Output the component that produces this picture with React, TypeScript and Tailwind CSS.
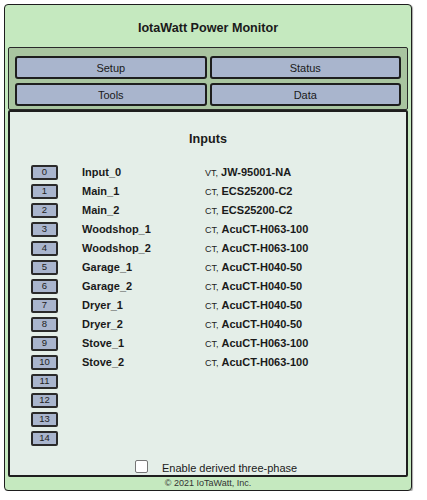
import React from "react";

const rows: { name?: string; type?: string; model?: string }[] = [
  { name: "Input_0", type: "VT", model: "JW-95001-NA" },
  { name: "Main_1", type: "CT", model: "ECS25200-C2" },
  { name: "Main_2", type: "CT", model: "ECS25200-C2" },
  { name: "Woodshop_1", type: "CT", model: "AcuCT-H063-100" },
  { name: "Woodshop_2", type: "CT", model: "AcuCT-H063-100" },
  { name: "Garage_1", type: "CT", model: "AcuCT-H040-50" },
  { name: "Garage_2", type: "CT", model: "AcuCT-H040-50" },
  { name: "Dryer_1", type: "CT", model: "AcuCT-H040-50" },
  { name: "Dryer_2", type: "CT", model: "AcuCT-H040-50" },
  { name: "Stove_1", type: "CT", model: "AcuCT-H063-100" },
  { name: "Stove_2", type: "CT", model: "AcuCT-H063-100" },
  {},
  {},
  {},
  {},
];

export default function App() {
  return (
    <div className="pl-[4px] pt-[4px] font-['Liberation_Sans',Arial,sans-serif] text-[#1a1a1a]">
      <div className="w-[408px] h-[487px] border border-[#1e1e1e] rounded-[4px] bg-[#c5e9bf] flex flex-col px-[3px] shadow-[1px_1px_1px_rgba(0,0,0,0.35)]">
        <div className="h-[44px] pt-[6px] flex items-center justify-center text-[12.6px] font-bold">
          IotaWatt Power Monitor
        </div>
        <div className="border border-[#2a2a2a] rounded-[2px] bg-[#a9c5a0] pt-[8px] pb-[3px] px-[6px] grid grid-cols-2 gap-x-[3px] gap-y-[4px]">
          {["Setup", "Status", "Tools", "Data"].map((t) => (
            <div
              key={t}
              className="h-[23px] pt-[2px] border-2 border-[#1e1e1e] rounded-[3px] bg-[#a9b5cd] text-[11px] flex items-center justify-center"
            >
              {t}
            </div>
          ))}
        </div>
        <div className="h-[367px] border-2 border-[#1e1e1e] rounded-[2px] bg-[#e4eee8] flex flex-col">
          <div className="pt-[20px] h-[35px] leading-[15px] text-center text-[12.6px] font-bold">
            Inputs
          </div>
          <div className="mt-[16px] flex flex-col pl-[21px]">
            {rows.map((r, i) => (
              <div key={i} className="h-[19px] flex items-center">
                <div className="w-[27px] h-[15px] border-2 border-[#2a2a2a] rounded-[2px] bg-[#a9b5cd] text-[9.5px] leading-none flex items-center justify-center text-[#222]">
                  {i}
                </div>
                {r.name && (
                  <>
                    <div className="ml-[24px] w-[123px] text-[11px] font-bold">{r.name}</div>
                    <div className="flex items-baseline">
                      <span className="text-[9px] text-[#222]">{r.type},</span>
                      <span className="ml-[3px] text-[11px] font-bold">{r.model}</span>
                    </div>
                  </>
                )}
              </div>
            ))}
          </div>
          <div className="mt-[9px] h-[19px] flex items-center pl-[125px]">
            <div className="w-[13px] h-[13px] bg-white border border-[#767676] rounded-[2px]" />
            <span className="ml-[14px] text-[11px] mt-[5px]">Enable derived three-phase</span>
          </div>
        </div>
        <div className="flex-1 flex items-center justify-center text-[9px] text-[#333]">
          © 2021 IoTaWatt, Inc.
        </div>
      </div>
    </div>
  );
}
